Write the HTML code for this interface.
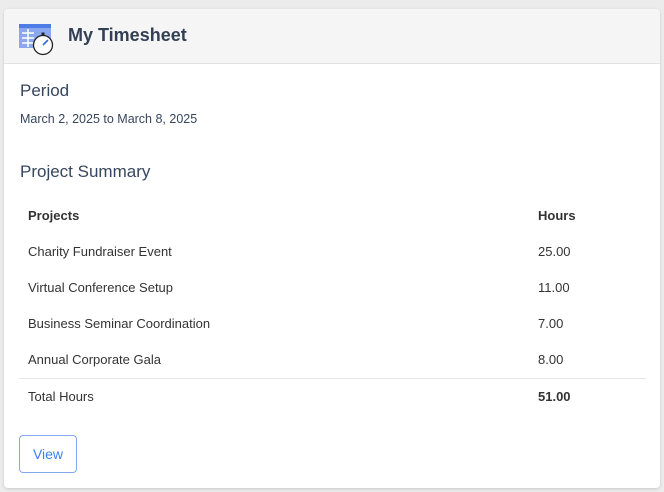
<!DOCTYPE html>
<html><head><style>
body{margin:0;background:#ececec;font-family:"Liberation Sans",sans-serif;width:664px;height:492px;overflow:hidden;position:relative}
.card{position:absolute;left:4px;top:9px;width:656px;height:479px;background:#fff;border-radius:4px;box-shadow:0 1px 3px rgba(0,0,0,.15);overflow:hidden}
.hd{height:54px;background:#f5f5f5;border-bottom:1px solid #e2e2e2;position:relative}
.t{position:absolute;left:64px;top:16px;font-size:18px;font-weight:bold;color:#333f55}
.a{position:absolute;color:#37465e}
.r{position:absolute;font-size:13px;color:#333}
</style></head><body>
<div class="card">
<div class="hd">
<svg style="position:absolute;left:14px;top:14px" width="38" height="34" viewBox="0 0 38 34">
<rect x="1" y="1" width="32" height="24" fill="#8aa8f0"/>
<rect x="1" y="1" width="32" height="4" fill="#4f7de6"/>
<g stroke="#fff" stroke-width="1.5"><line x1="4" y1="10" x2="16" y2="10"/><line x1="4" y1="15" x2="16" y2="15"/><line x1="4" y1="20" x2="16" y2="20"/><line x1="10" y1="6" x2="10" y2="24"/></g>
<circle cx="25" cy="22" r="9.5" fill="#fff" stroke="#222" stroke-width="1.3"/>
<rect x="23.5" y="9.5" width="3" height="3" fill="#222"/>
<line x1="25" y1="22" x2="30" y2="17" stroke="#2d6be0" stroke-width="1.6"/>
</svg>
<div class="t">My Timesheet</div>
</div>
<div class="a" style="left:16px;top:72px;font-size:17px">Period</div>
<div class="a" style="left:16px;top:103px;font-size:12.5px">March 2, 2025 to March 8, 2025</div>
<div class="a" style="left:16px;top:153px;font-size:17px">Project Summary</div>
<div class="r" style="left:24px;top:199px;font-weight:bold">Projects</div>
<div class="r" style="left:534px;top:199px;font-weight:bold">Hours</div>
<div class="r" style="left:24px;top:235px">Charity Fundraiser Event</div><div class="r" style="left:534px;top:235px">25.00</div>
<div class="r" style="left:24px;top:271px">Virtual Conference Setup</div><div class="r" style="left:534px;top:271px">11.00</div>
<div class="r" style="left:24px;top:307px">Business Seminar Coordination</div><div class="r" style="left:534px;top:307px">7.00</div>
<div class="r" style="left:24px;top:343px">Annual Corporate Gala</div><div class="r" style="left:534px;top:343px">8.00</div>
<div style="position:absolute;left:15px;top:369px;width:627px;height:1px;background:#e6e6e6"></div>
<div class="r" style="left:24px;top:380px">Total Hours</div><div class="r" style="left:534px;top:380px;font-weight:bold">51.00</div>
<div style="position:absolute;left:15px;top:426px;width:56px;height:36px;border:1px solid #7fa8ee;border-radius:4px;color:#3b7ff0;font-size:14px;text-align:center;line-height:36px">View</div>
</div>
</body></html>
